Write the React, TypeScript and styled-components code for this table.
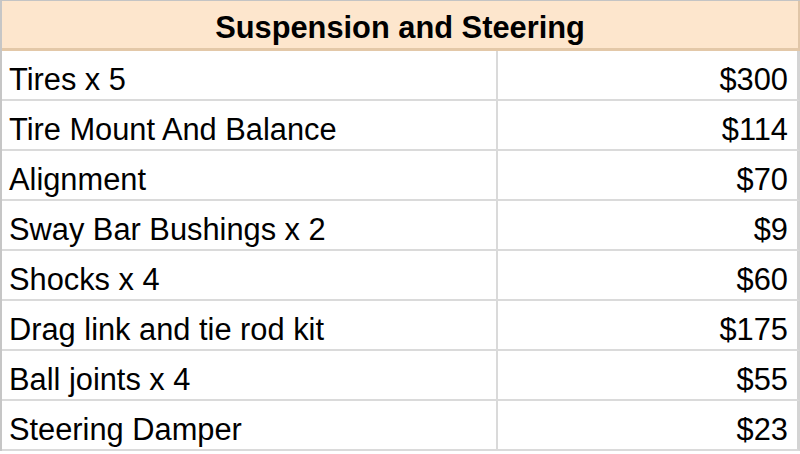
import React from "react";
import styled, { createGlobalStyle } from "styled-components";

const GlobalStyle = createGlobalStyle`
  html, body {
    margin: 0;
    padding: 0;
    background: #ffffff;
  }
  body {
    font-family: "Liberation Sans", Arial, sans-serif;
    color: #000000;
  }
`;

const Sheet = styled.div`
  width: 800px;
  box-sizing: border-box;
  border-left: 2px solid #c6c6c6;
  border-top: 1px solid #c4c4c4;
`;

const Header = styled.div`
  height: 50px;
  box-sizing: border-box;
  background: #fde6cd;
  border-bottom: 3px solid #e3c8a8;
  border-right: 2px solid #e0c6a8;
  display: flex;
  align-items: flex-end;
  justify-content: center;
  padding-bottom: 3px;
  font-size: 30.8px;
  font-weight: bold;
  line-height: 34px;
`;

const Grid = styled.div`
  display: grid;
  grid-template-columns: 496px 1fr;
`;

const Cell = styled.div<{ $align?: "left" | "right" }>`
  height: 50px;
  box-sizing: border-box;
  display: flex;
  align-items: flex-end;
  justify-content: ${(p) => (p.$align === "right" ? "flex-end" : "flex-start")};
  padding: ${(p) => (p.$align === "right" ? "0 9px 2px 0" : "0 0 2px 7px")};
  border-bottom: 2px solid #dadada;
  border-right: ${(p) => (p.$align === "right" ? "3px solid #d4d4d4" : "2px solid #dadada")};
  font-size: 30.8px;
  line-height: 34px;
  white-space: nowrap;
`;

const items: [string, string][] = [
  ["Tires x 5", "$300"],
  ["Tire Mount And Balance", "$114"],
  ["Alignment", "$70"],
  ["Sway Bar Bushings x 2", "$9"],
  ["Shocks x 4", "$60"],
  ["Drag link and tie rod kit", "$175"],
  ["Ball joints x 4", "$55"],
  ["Steering Damper", "$23"],
];

export default function App() {
  return (
    <>
      <GlobalStyle />
      <Sheet>
        <Header>Suspension and Steering</Header>
        <Grid>
          {items.map(([name, price]) => (
            <React.Fragment key={name}>
              <Cell $align="left">{name}</Cell>
              <Cell $align="right">{price}</Cell>
            </React.Fragment>
          ))}
        </Grid>
      </Sheet>
    </>
  );
}
